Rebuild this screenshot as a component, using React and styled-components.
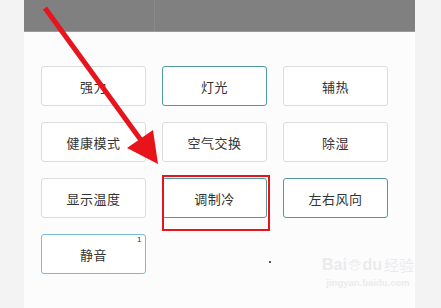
import styled, { createGlobalStyle } from "styled-components";

const GlobalStyle = createGlobalStyle`
  html, body {
    margin: 0;
    padding: 0;
    background: #f3f3f3;
    font-family: "Noto Sans CJK SC", "Noto Sans", sans-serif;
  }
`;

const buttons = [
  { label: "强力" },
  { label: "灯光", tone: "teal" },
  { label: "辅热" },
  { label: "健康模式" },
  { label: "空气交换" },
  { label: "除湿" },
  { label: "显示温度" },
  { label: "调制冷", tone: "teal" },
  { label: "左右风向", tone: "teal" },
  { label: "静音", tone: "blue", badge: "1" },
];

const borders = {
  teal: "#4f9aa0",
  blue: "#79bcd6",
  plain: "#dcdcdc",
};

const App = () => {
  return (
    <>
      <GlobalStyle />
      <Panel>
        <TopBar>
          <TopCell />
          <TopCell $grow />
        </TopBar>
        <Grid>
          {buttons.map((b) => (
            <Button key={b.label} $tone={b.tone || "plain"}>
              {b.label}
              {b.badge && <Badge>{b.badge}</Badge>}
            </Button>
          ))}
        </Grid>
        <Dot />
        <Watermark>
          <BrandRow>
            <span>Bai</span>
            <Paw viewBox="0 0 24 20">
              <circle cx="5" cy="7" r="2.4" />
              <circle cx="9.5" cy="3" r="2.4" />
              <circle cx="14.5" cy="3" r="2.4" />
              <circle cx="19" cy="7" r="2.4" />
              <path d="M6 17c0-4 3-7 6-7s6 3 6 7c0 2-3 2-6 2s-6 0-6-2z" />
            </Paw>
            <span>du</span>
            <Jy>经验</Jy>
          </BrandRow>
          <Url>jingyan.baidu.com</Url>
        </Watermark>
      </Panel>
      <Annotation viewBox="0 0 441 308" width="441" height="308">
        <line x1="45" y1="8" x2="143" y2="143" stroke="#e8141c" strokeWidth="5" />
        <polygon points="127,148 153,130 158,164" fill="#e8141c" />
        <rect x="163" y="176" width="106" height="54" fill="none" stroke="#e8141c" strokeWidth="2" />
      </Annotation>
    </>
  );
};

const Panel = styled.div`
  position: relative;
  margin-left: 24px;
  width: 391px;
  height: 308px;
  background: #fcfcfd;
  overflow: hidden;
`;

const TopBar = styled.div`
  display: flex;
  height: 31px;
  background: #808080;
  border-bottom: 1px solid #9a9a9a;
`;

const TopCell = styled.div`
  width: ${(p) => (p.$grow ? "auto" : "130px")};
  flex: ${(p) => (p.$grow ? 1 : "none")};
  border-right: ${(p) => (p.$grow ? "none" : "1px solid #8a8a8a")};
`;

const Grid = styled.div`
  display: grid;
  grid-template-columns: repeat(3, 105px);
  grid-auto-rows: 40px;
  column-gap: 16px;
  row-gap: 16px;
  padding: 34px 0 0 17px;
`;

const Button = styled.div`
  position: relative;
  display: flex;
  align-items: center;
  justify-content: center;
  box-sizing: border-box;
  border: 1px solid ${(p) => borders[p.$tone]};
  border-radius: 3px;
  background: #ffffff;
  color: #333333;
  font-size: 13px;
  letter-spacing: 0.5px;
`;

const Badge = styled.span`
  position: absolute;
  top: 0;
  right: 3px;
  font-size: 8px;
  color: #333;
  font-family: "Liberation Sans", sans-serif;
`;

const Dot = styled.div`
  position: absolute;
  left: 245px;
  top: 261px;
  width: 2px;
  height: 2px;
  background: #555;
`;

const Watermark = styled.div`
  position: absolute;
  left: 298px;
  top: 255px;
  width: 92px;
  color: #ebebed;
  font-family: "Liberation Sans", sans-serif;
  text-align: center;
  white-space: nowrap;
`;

const BrandRow = styled.div`
  display: flex;
  align-items: flex-end;
  justify-content: center;
  font-size: 16px;
  font-weight: bold;
  line-height: 20px;
`;

const Paw = styled.svg`
  width: 18px;
  height: 18px;
  margin: 0 1px 1px;
  fill: none;
  stroke: #e8e8ea;
  stroke-width: 1.4;
`;

const Jy = styled.span`
  margin-left: 2px;
  font-family: "Noto Sans CJK SC", sans-serif;
  font-weight: normal;
  font-size: 15px;
`;

const Url = styled.div`
  font-size: 9.5px;
  font-weight: bold;
  margin-top: 2px;
`;

const Annotation = styled.svg`
  position: absolute;
  left: 0;
  top: 0;
  pointer-events: none;
`;

export default App;
